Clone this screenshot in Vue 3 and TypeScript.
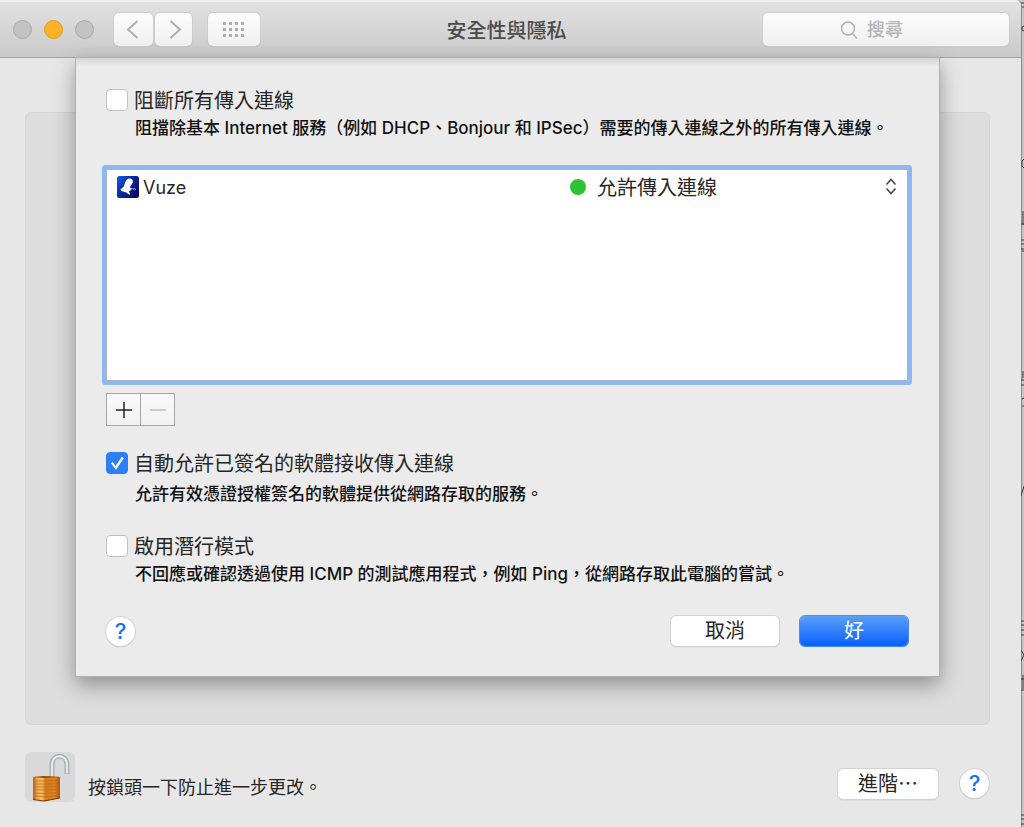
<script setup lang="ts">
import { ref } from 'vue'

interface AppRule {
  name: string
  access: string
}

const blockAll = ref(false)
const allowSigned = ref(true)
const stealth = ref(false)
const query = ref('')
const rules = ref<AppRule[]>([{ name: 'Vuze', access: 'allow' }])
const gridColumns: number[] = [0, 6, 12, 18]
const gridRows: number[] = [0, 6, 12]
</script>

<template>
  <div class="desktop" lang="zh-Hant">
    <main class="window">
      <header class="toolbar">
        <div class="lights">
          <button class="light" type="button" aria-label="關閉"></button>
          <button class="light amber" type="button" aria-label="縮到最小"></button>
          <button class="light" type="button" aria-label="縮放"></button>
        </div>
        <nav class="history">
          <button class="tool back" type="button" aria-label="返回">
            <svg width="18" height="20" viewBox="0 0 18 20"><path d="M12.500 1 3 9.500l9.500 8.500" /></svg>
          </button>
          <button class="tool forward" type="button" aria-label="前進">
            <svg width="18" height="20" viewBox="0 0 18 20"><path d="m5.500 1 9.500 8.500-9.500 8.500" /></svg>
          </button>
        </nav>
        <button class="tool all" type="button" aria-label="顯示全部">
          <svg width="22" height="16" viewBox="0 0 22 16">
            <template v-for="y in gridRows" :key="y">
              <rect v-for="x in gridColumns" :key="x" :x="x" :y="y" width="3" height="3" />
            </template>
          </svg>
        </button>
        <h1 class="title">安全性與隱私</h1>
        <label class="search">
          <svg width="20" height="20" viewBox="0 0 20 20">
            <circle cx="9" cy="8.500" r="6.500" />
            <path d="m13.500 13.500 4.500 5" />
          </svg>
          <input v-model="query" type="text" placeholder="搜尋" aria-label="搜尋" />
        </label>
      </header>

      <div class="body">
        <div class="pane"></div>

        <footer class="footer">
          <button class="lock" type="button" aria-label="鎖頭">
            <svg width="50" height="50" viewBox="0 0 50 50">
              <defs>
                <linearGradient id="brass" x1="0" x2="1" y1="0" y2="0">
                  <stop offset="0" stop-color="#b96413" />
                  <stop offset="0.180" stop-color="#f2b050" />
                  <stop offset="0.340" stop-color="#f7bd63" />
                  <stop offset="0.460" stop-color="#d87c1b" />
                  <stop offset="0.800" stop-color="#df861f" />
                  <stop offset="1" stop-color="#a9550c" />
                </linearGradient>
              </defs>
              <path d="M27 25V12.500c0-11 15-11 15 0V22" fill="none" stroke="#8a979c" stroke-width="4.600" />
              <path d="M27 25V12.500c0-11 15-11 15 0V21.500" fill="none" stroke="#bccacf" stroke-width="3.200" />
              <path d="M27 25V12.500c0-11 15-11 15 0V21.500" fill="none" stroke="#f1f7f8" stroke-width="1.400" />
              <path d="m8 25 11-1 16 1v21l-16 3-11-1.500z" fill="url(#brass)" />
              <path d="m8 25 11-1 16 1-16 1z" fill="#8d4b12" />
              <path
                d="M8 29h11l16-.5M8 32h11l16-.5M8 35h11l16-.5M8 38h11l16-.5M8 41l11 .5 16-1M8 44l11 .8 16-1.500"
                fill="none" stroke="#b3661a" stroke-width="0.700"
              />
              <path d="m8 47.500 11 1.500 16-3" fill="none" stroke="#753406" stroke-width="1.200" />
            </svg>
          </button>
          <span class="lock-text">按鎖頭一下防止進一步更改。</span>
          <button class="push advanced" type="button">進階⋯</button>
          <button class="help" type="button" aria-label="輔助說明">?</button>
        </footer>

        <section class="sheet" role="dialog" aria-label="防火牆選項">
          <label class="option">
            <input v-model="blockAll" type="checkbox" />
            <span>阻斷所有傳入連線</span>
          </label>
          <p class="note">阻擋除基本 Internet 服務（例如 DHCP、Bonjour 和 IPSec）需要的傳入連線之外的所有傳入連線。</p>

          <div class="list">
            <table>
              <tbody>
                <tr v-for="rule in rules" :key="rule.name">
                  <td class="app">
                    <div class="app-cell">
                      <svg width="22" height="22" viewBox="0 0 22 22">
                        <defs>
                          <linearGradient id="vuze" x1="0" y1="0" x2="1" y2="0.700">
                            <stop offset="0" stop-color="#0b62e0" />
                            <stop offset="0.550" stop-color="#0a2498" />
                            <stop offset="1" stop-color="#0a0b66" />
                          </linearGradient>
                        </defs>
                        <rect width="22" height="22" rx="2.500" fill="url(#vuze)" />
                        <path
                          d="M12 2.500c2.500-.6 4.300 1.200 3.800 3.800-.3 2-2.600 3-2.700 4.700 0 1.300 1.400 1.700 1.200 2.700-.3 1.100-2.300.9-2.300 1.900.1.900 1.300 1.700.9 2.600-.5.900-1.700.1-2.300-.7-.8-1-1.600-1.300-3-1.600-1.600-.4-3.900-.8-4-2.100 0-1.400 2.300-1.600 3.200-3.300C8 8 8.300 3.300 12 2.500z"
                          fill="#fff"
                        />
                        <path d="m13.500 13.500 1.500-1.300 1 1.200 1.300-1 .7 1 1-.3" fill="none" stroke="#aab6ea" />
                      </svg>
                      <span>{{ rule.name }}</span>
                    </div>
                  </td>
                  <td>
                    <div class="access-cell">
                      <i class="dot"></i>
                      <select v-model="rule.access" :aria-label="rule.name">
                        <option value="allow">允許傳入連線</option>
                        <option value="block">阻斷傳入連線</option>
                      </select>
                      <svg class="chevrons" width="12" height="18" viewBox="0 0 12 18">
                        <path d="m1.500 6.500 4.500-5 4.500 5M1.500 10.500l4.500 5 4.500-5" />
                      </svg>
                    </div>
                  </td>
                </tr>
              </tbody>
            </table>
          </div>

          <div class="segments">
            <button type="button" aria-label="加入">
              <svg width="18" height="18" viewBox="0 0 18 18"><path d="M9 1v16M1 9h16" /></svg>
            </button>
            <button type="button" aria-label="移除" disabled>
              <svg width="18" height="18" viewBox="0 0 18 18"><path d="M1 9h16" /></svg>
            </button>
          </div>

          <label class="option">
            <input v-model="allowSigned" type="checkbox" />
            <span>自動允許已簽名的軟體接收傳入連線</span>
          </label>
          <p class="note roomy">允許有效憑證授權簽名的軟體提供從網路存取的服務。</p>

          <label class="option">
            <input v-model="stealth" type="checkbox" />
            <span>啟用潛行模式</span>
          </label>
          <p class="note">不回應或確認透過使用 ICMP 的測試應用程式，例如 Ping，從網路存取此電腦的嘗試。</p>

          <div class="actions">
            <button class="help" type="button" aria-label="輔助說明">?</button>
            <button class="push cancel" type="button">取消</button>
            <button class="push primary" type="button">好</button>
          </div>
        </section>
      </div>
    </main>

    <svg class="behind" width="3" height="827" viewBox="0 0 3 827" aria-hidden="true">
      <path
        d="M0 3h3M1 7h2M3 26l-2 1v3l2 1M3 159l-2 2v5l2 2M1 212h2M2 213v12M0 224h3M0 240h3M0 244h3M0 249h3M1 251h2M2 371v7M0 380h3M0 385h3M3 398l-2 1M1 406h2M3 486l-3 10M0 621h3M0 625h3M0 630h3M0 635h3M0 650l3 5-3 6M2 675v14M0 679h3M0 690h3M0 815h3M0 819h3M0 824h3"
      />
    </svg>
  </div>
</template>

<style>
body {
  margin: 0;
}
</style>

<style scoped>
.desktop {
  display: flex;
  min-height: 100vh;
  background: #c4c6c5;
  color: #262626;
  font-family: Inter, "Noto Sans CJK TC", sans-serif;
  font-size: 20px;
}

.desktop * {
  box-sizing: border-box;
}

button,
input,
select {
  margin: 0;
  padding: 0;
  border: 0;
  color: inherit;
  font: inherit;
}

.window {
  display: flex;
  flex: 1;
  flex-direction: column;
  overflow: hidden;
  border-top-right-radius: 6px;
  background: #e7e7e7;
  box-shadow: 1px 0 0 #8c8e8d;
}

.behind {
  flex: none;
  fill: none;
  stroke: #3c3a38;
  stroke-width: 1;
}

.toolbar {
  display: flex;
  align-items: center;
  height: 58px;
  padding: 0 12px 0 13px;
  border-top: 2px solid #eeeeee;
  border-bottom: 1px solid #a3a3a3;
  background: linear-gradient(#e1e1e1, #cacaca);
}

.lights {
  display: flex;
  gap: 12px;
  margin-right: 20px;
}

.light {
  width: 19px;
  height: 19px;
  border: 1px solid #a9a9a9;
  border-radius: 50%;
  background: #c3c3c3;
}

.amber {
  border-color: #df9a22;
  background: #fdb126;
}

.history {
  display: flex;
  gap: 2px;
  margin-right: 16px;
}

.tool,
.search {
  display: flex;
  align-items: center;
  height: 33px;
  border-radius: 5px;
  background: linear-gradient(#fcfcfc, #f0f0f0);
  box-shadow: 0 0 0 1px #cccccc, 0 1px 1px #999999;
}

.tool {
  justify-content: center;
}

.tool svg {
  fill: none;
  stroke: #b0b0b0;
  stroke-width: 2;
}

.back {
  width: 39px;
}

.forward {
  width: 37px;
}

.all {
  width: 52px;
}

.all svg {
  fill: #adadad;
  stroke: none;
}

.title {
  flex: 1;
  margin: 0;
  padding: 2px 10px 0 0;
  color: #4b4b4b;
  font-size: 20px;
  font-weight: 500;
  line-height: 28px;
  text-align: center;
}

.search {
  gap: 8px;
  width: 246px;
  padding-left: 76px;
}

.search svg {
  flex: none;
  fill: none;
  stroke: #b3b3b3;
  stroke-width: 1.500;
}

.search input {
  flex: 1;
  min-width: 0;
  height: 28px;
  outline: 0;
  background: none;
  font-size: 18px;
  font-weight: 500;
}

.search input::placeholder {
  color: #b5b5b5;
  opacity: 1;
}

.body {
  position: relative;
  display: flex;
  flex: 1;
  flex-direction: column;
  padding: 54px 31px 25px 25px;
}

.pane {
  flex: 1;
  border: 1px solid #d6d6d6;
  border-radius: 6px;
  background: #dddddd;
}

.footer {
  display: flex;
  align-items: center;
  margin-top: 27px;
}

.lock {
  width: 50px;
  height: 50px;
  border-radius: 6px;
  background: #d9d9d9;
}

.lock svg {
  display: block;
}

.lock-text {
  flex: 1;
  padding: 22px 0 0 13px;
  font-size: 18px;
  line-height: 28px;
}

.push {
  height: 30px;
  border-radius: 5px;
  background: #ffffff;
  box-shadow: 0 0 0 1px #d2d2d2, 0 1px 1px #a0a0a0;
  line-height: 30px;
  text-align: center;
}

.advanced {
  width: 100px;
  margin: 14px 22px 0 0;
}

.footer .help {
  margin: 12px 1px 0 0;
}

.help {
  width: 29px;
  height: 29px;
  border-radius: 50%;
  background: #ffffff;
  box-shadow: 0 0 0 1px #d2d2d2, 0 1px 1px #a0a0a0;
  color: #1570fb;
  font-size: 22px;
  font-weight: 500;
  line-height: 29px;
}

.sheet {
  position: absolute;
  top: 0;
  right: 82px;
  left: 76px;
  padding: 28px 31px 30px 30px;
  background: linear-gradient(#d3d3d3, #ebebeb 8px);
  box-shadow: 0 0 0 1px #b0b0b0, 0 8px 20px 1px rgba(0, 0, 0, 0.35);
}

.option {
  display: flex;
  align-items: center;
  gap: 6px;
  height: 28px;
  line-height: 28px;
}

.option span {
  padding-top: 2px;
}

.option input {
  width: 22px;
  height: 22px;
  appearance: none;
  border: 1px solid #c0c0c0;
  border-radius: 4px;
  background: #ffffff;
}

.option input:checked {
  border-color: #2d7ff9;
  background: #2d7ff9;
}

.option input:checked::before {
  display: block;
  width: 20px;
  height: 20px;
  background: #ffffff;
  clip-path: polygon(20% 51%, 29% 45%, 43% 65%, 74% 19%, 84% 26%, 45% 84%);
  content: "";
}

.note {
  margin: 2px 0 26px;
  padding-left: 29px;
  color: #111111;
  font-size: 17px;
  font-weight: 500;
  line-height: 24px;
}

.roomy {
  margin-top: 5px;
}

.list {
  min-height: 212px;
  margin: 29px 0 12px;
  border: 1px solid #a9b4c4;
  background: #ffffff;
  box-shadow: 0 0 0 4px #8fb7f2;
  border-radius: 1px;
}

table {
  width: 100%;
  border-collapse: collapse;
  table-layout: fixed;
}

td {
  padding: 2px 10px;
}

.app {
  width: 453px;
}

.app-cell,
.access-cell {
  display: flex;
  align-items: center;
  height: 30px;
}

.app-cell {
  gap: 4px;
  font-size: 18px;
}

.dot {
  width: 16px;
  height: 16px;
  margin-right: 11px;
  border-radius: 50%;
  background: #2cc334;
}

select {
  flex: 1;
  height: 30px;
  padding-top: 2px;
  appearance: none;
  background: none;
}

.chevrons {
  fill: none;
  stroke: #4a4a4a;
  stroke-width: 1.600;
}

.segments {
  display: flex;
  margin-bottom: 23px;
}

.segments button {
  display: grid;
  width: 35px;
  height: 33px;
  place-items: center;
  border: 1px solid #a6a6a6;
  background: linear-gradient(#fafafa, #f1f1f1);
}

.segments button + button {
  margin-left: -1px;
}

.segments svg {
  fill: none;
  stroke: #222222;
  stroke-width: 1.500;
}

.segments button:disabled svg {
  stroke: #bdbdbd;
}

.actions {
  display: flex;
  align-items: center;
  gap: 21px;
  margin-top: 30px;
}

.cancel,
.primary {
  width: 108px;
}

.cancel {
  margin-left: auto;
}

.primary {
  background: linear-gradient(#589ff8, #0a60ff);
  box-shadow: 0 0 0 1px #4a8df0, 0 1px 1px #a8b8d8;
  color: #ffffff;
}
</style>
